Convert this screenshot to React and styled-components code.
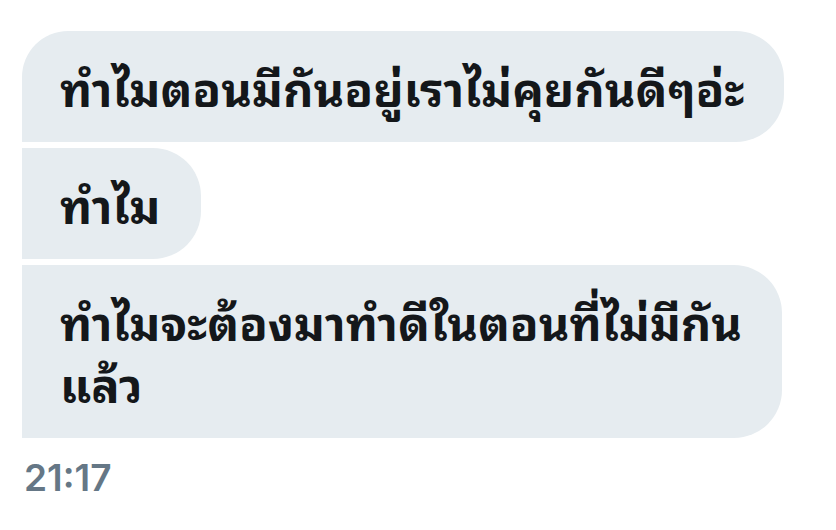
import React from 'react';
import styled, { createGlobalStyle } from 'styled-components';

const GlobalStyle = createGlobalStyle`
  html, body {
    margin: 0;
    padding: 0;
    background: #ffffff;
  }
`;

const Thread = styled.div`
  display: flex;
  flex-direction: column;
  align-items: flex-start;
  gap: 6px;
  padding: 31px 0 0 22px;
  width: 836px;
  height: 530px;
  box-sizing: border-box;
`;

const Bubble = styled.div`
  box-sizing: border-box;
  padding: 24px 40px 25px 38px;
  background: #e6ecf0;
  color: #14171a;
  font-family: "Noto Sans Thai Looped", "Noto Sans Thai", "Noto Sans", sans-serif;
  font-weight: 700;
  font-size: 47px;
  line-height: 62px;
  border-radius: ${(p) => (p.$first ? '46px' : '0')} 48px 48px 0;
`;

const Line = styled.span`
  display: block;
  white-space: nowrap;
`;

const Time = styled.div`
  margin: 11px 0 0 2px;
  font-family: Inter, "Liberation Sans", sans-serif;
  font-weight: 600;
  font-size: 37px;
  color: #657786;
`;

const messages = [
  ['ทำไมตอนมีกันอยู่เราไม่คุยกันดีๆอ่ะ'],
  ['ทำไม'],
  ['ทำไมจะต้องมาทำดีในตอนที่ไม่มีกัน', 'แล้ว'],
];

export default function App() {
  return (
    <>
      <GlobalStyle />
      <Thread>
        {messages.map((lines, i) => (
          <Bubble key={i} $first={i === 0}>
            {lines.map((l) => (
              <Line key={l}>{l}</Line>
            ))}
          </Bubble>
        ))}
        <Time>21:17</Time>
      </Thread>
    </>
  );
}
